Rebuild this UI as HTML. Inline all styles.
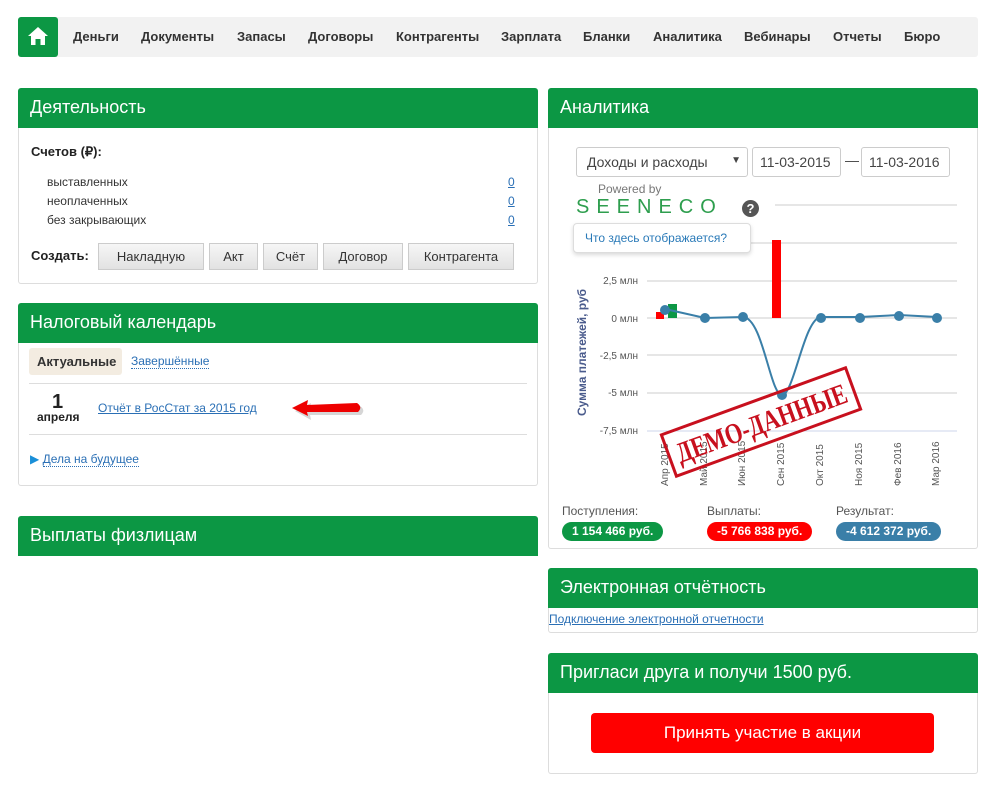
<!DOCTYPE html>
<html><head><meta charset="utf-8"><style>
*{box-sizing:border-box;margin:0;padding:0}
body{width:992px;height:795px;background:#fff;font-family:"Liberation Sans",Arial,sans-serif;position:relative;overflow:hidden;color:#222}
.a{position:absolute}
.nav{left:18px;top:17px;width:960px;height:40px;background:#f2f2f2;border-radius:3px}
.nav span{position:absolute;top:12px;font-size:13px;font-weight:bold;color:#333}
.home{left:18px;top:17px;width:40px;height:40px;background:#0c9744;border-radius:3px}
.hd{background:#0c9744;color:#fff;font-size:18px;height:40px;padding:9px 12px;border-radius:3px 3px 0 0}
.box{border:1px solid #ddd;border-top:none;border-radius:0 0 3px 3px}
.lnk{color:#2a6fb5;text-decoration:underline}
.btn{position:absolute;top:243px;height:27px;background:linear-gradient(#f6f6f6,#e2e2e2);border:1px solid #ccc;font-size:13px;text-align:center;line-height:25px;color:#333}
.sm{font-size:12px;color:#333}
.pill{position:absolute;top:522px;height:19px;border-radius:10px;color:#fff;font-weight:bold;font-size:12px;line-height:19px;padding:0 10px}
</style></head><body>
<div class="a nav">
<span style="left:55px">Деньги</span><span style="left:123px">Документы</span><span style="left:219px">Запасы</span><span style="left:290px">Договоры</span><span style="left:378px">Контрагенты</span><span style="left:483px">Зарплата</span><span style="left:565px">Бланки</span><span style="left:635px">Аналитика</span><span style="left:726px">Вебинары</span><span style="left:815px">Отчеты</span><span style="left:886px">Бюро</span>
</div>
<div class="a home"><svg width="40" height="40"><path d="M20 10 L30 19 H27 V28 H22.5 V22 H17.5 V28 H13 V19 H10 Z" fill="#fff"/></svg></div>

<div class="a hd" style="left:18px;top:88px;width:520px">Деятельность</div>
<div class="a box" style="left:18px;top:128px;width:520px;height:156px"></div>
<div class="a" style="left:31px;top:144px;font-size:13px;font-weight:bold">Счетов (₽):</div>
<div class="a sm" style="left:47px;top:175px">выставленных</div>
<div class="a sm" style="left:47px;top:194px">неоплаченных</div>
<div class="a sm" style="left:47px;top:213px">без закрывающих</div>
<div class="a lnk sm" style="left:508px;top:175px;color:#2a6fb5">0</div>
<div class="a lnk sm" style="left:508px;top:194px;color:#2a6fb5">0</div>
<div class="a lnk sm" style="left:508px;top:213px;color:#2a6fb5">0</div>
<div class="a" style="left:31px;top:248px;font-size:13px;font-weight:bold">Создать:</div>
<div class="btn" style="left:98px;width:106px">Накладную</div>
<div class="btn" style="left:209px;width:49px">Акт</div>
<div class="btn" style="left:263px;width:55px">Счёт</div>
<div class="btn" style="left:323px;width:80px">Договор</div>
<div class="btn" style="left:408px;width:106px">Контрагента</div>

<div class="a hd" style="left:18px;top:303px;width:520px">Налоговый календарь</div>
<div class="a box" style="left:18px;top:343px;width:520px;height:143px"></div>
<div class="a" style="left:29px;top:348px;width:93px;height:27px;background:#f3ece1;border-radius:3px;font-size:13px;font-weight:bold;color:#333;padding:6px 8px">Актуальные</div>
<div class="a sm" style="left:131px;top:354px;color:#2a6fb5;border-bottom:1px dotted #2a6fb5">Завершённые</div>
<div class="a" style="left:29px;top:383px;width:498px;border-top:1px solid #ddd"></div>
<div class="a" style="left:29px;top:434px;width:498px;border-top:1px solid #ddd"></div>
<div class="a" style="left:52px;top:391px;font-size:20px;font-weight:bold">1</div>
<div class="a" style="left:37px;top:410px;font-size:12px;font-weight:bold">апреля</div>
<div class="a lnk sm" style="left:98px;top:401px;color:#2a6fb5">Отчёт в РосСтат за 2015 год</div>
<svg class="a" style="left:290px;top:397px" width="78" height="26"><path d="M3 11 L19 3 L18 8 L68 6 Q74 10 69 15 L18 15 L19 20 Z" fill="#999" opacity=".4" transform="translate(2,3)"/><path d="M2 11 L18 3 L17 8 L67 6 Q73 10 68 15 L17 15 L18 19 Z" fill="#e00"/></svg>
<div class="a" style="left:30px;top:452px;font-size:12px;color:#2a6fb5"><span style="color:#1a8fd8">▶</span> <span style="border-bottom:1px dotted #2a6fb5">Дела на будущее</span></div>

<div class="a hd" style="left:18px;top:516px;width:520px">Выплаты физлицам</div>

<div class="a hd" style="left:548px;top:88px;width:430px">Аналитика</div>
<div class="a box" style="left:548px;top:128px;width:430px;height:421px"></div>
<div class="a" style="left:576px;top:147px;width:172px;height:30px;border:1px solid #ccc;border-radius:3px;font-size:14px;color:#444;padding:6px 10px">Доходы и расходы<span style="position:absolute;right:6px;top:7px;font-size:10px">▼</span></div>
<div class="a" style="left:752px;top:147px;width:89px;height:30px;border:1px solid #ccc;border-radius:3px;font-size:14px;color:#444;padding:6px 7px">11-03-2015</div>
<div class="a" style="left:845px;top:152px;font-size:14px;color:#444">—</div>
<div class="a" style="left:861px;top:147px;width:89px;height:30px;border:1px solid #ccc;border-radius:3px;font-size:14px;color:#444;padding:6px 7px">11-03-2016</div>
<div class="a" style="left:598px;top:182px;font-size:12px;color:#777">Powered by</div>
<div class="a" style="left:576px;top:196px;font-size:20px;color:#2e9e4e;letter-spacing:7px;font-weight:300">ЅEENECO</div>
<div class="a" style="left:742px;top:200px;width:17px;height:17px;border-radius:50%;background:#555;color:#fff;font-size:13px;font-weight:bold;text-align:center;line-height:17px">?</div>
<svg class="a" style="left:548px;top:128px" width="430" height="420">
<g stroke="#ccc" stroke-width="1">
<line x1="227" y1="77" x2="409" y2="77"/><line x1="99" y1="115" x2="409" y2="115"/><line x1="99" y1="153" x2="409" y2="153"/><line x1="99" y1="190" x2="409" y2="190"/><line x1="99" y1="227" x2="409" y2="227"/><line x1="99" y1="265" x2="409" y2="265"/>
</g>
<line x1="99" y1="303" x2="409" y2="303" stroke="#ccd6eb"/>
<g font-size="10" fill="#555" text-anchor="end" font-family="Liberation Sans">
<text x="90" y="156">2,5 млн</text><text x="90" y="194">0 млн</text><text x="90" y="231">-2,5 млн</text><text x="90" y="268">-5 млн</text><text x="90" y="306">-7,5 млн</text></g>
<text transform="translate(38,288) rotate(-90)" font-size="12" font-weight="bold" fill="#4a5b8c" font-family="Liberation Sans">Сумма платежей, руб</text>
<rect x="108" y="184" width="8" height="7" fill="#f00"/><rect x="120" y="176" width="9" height="14" fill="#0c9744"/>
<rect x="224" y="112" width="9" height="78" fill="#f00"/>
<path d="M117 181 L157 190 L195 189 C215 190 222 267 234 267 C246 267 256 190 273 189 L312 189 L351 187 L389 189" fill="none" stroke="#3a7fa8" stroke-width="2"/>
<g fill="#3a7fa8"><circle cx="117" cy="182" r="5"/><circle cx="157" cy="190" r="5"/><circle cx="195" cy="189" r="5"/><circle cx="234" cy="267" r="5"/><circle cx="273" cy="190" r="5"/><circle cx="312" cy="190" r="5"/><circle cx="351" cy="188" r="5"/><circle cx="389" cy="190" r="5"/></g>
<g font-size="10" fill="#555" font-family="Liberation Sans">
<text transform="translate(120,358) rotate(-90)">Апр 2015</text><text transform="translate(159,358) rotate(-90)">Май 2015</text><text transform="translate(197,358) rotate(-90)">Июн 2015</text><text transform="translate(236,358) rotate(-90)">Сен 2015</text><text transform="translate(275,358) rotate(-90)">Окт 2015</text><text transform="translate(314,358) rotate(-90)">Ноя 2015</text><text transform="translate(353,358) rotate(-90)">Фев 2016</text><text transform="translate(391,358) rotate(-90)">Мар 2016</text></g>
<g transform="translate(213,294) rotate(-20)"><rect x="-98" y="-22" width="196" height="44" fill="none" stroke="#c8101e" stroke-width="3"/><text x="0" y="11" text-anchor="middle" font-size="29" font-weight="bold" fill="#c8101e" font-family="Liberation Serif" textLength="180" lengthAdjust="spacingAndGlyphs">ДЕМО-ДАННЫЕ</text></g>
</svg>
<div class="a" style="left:573px;top:223px;width:178px;height:30px;background:#fff;border:1px solid #ddd;border-radius:4px;box-shadow:0 2px 4px rgba(0,0,0,.15);font-size:12px;color:#2a7ab8;padding:7px 11px">Что здесь отображается?</div>
<div class="a sm" style="left:562px;top:504px;color:#555">Поступления:</div>
<div class="a sm" style="left:707px;top:504px;color:#555">Выплаты:</div>
<div class="a sm" style="left:836px;top:504px;color:#555">Результат:</div>
<div class="pill" style="left:562px;background:#0c9744">1 154 466 руб.</div>
<div class="pill" style="left:707px;background:#f00">-5 766 838 руб.</div>
<div class="pill" style="left:836px;background:#3a7fa8">-4 612 372 руб.</div>

<div class="a hd" style="left:548px;top:568px;width:430px">Электронная отчётность</div>
<div class="a box" style="left:548px;top:608px;width:430px;height:25px"></div>
<div class="a lnk sm" style="left:549px;top:612px;color:#2a6fb5">Подключение электронной отчетности</div>

<div class="a hd" style="left:548px;top:653px;width:430px">Пригласи друга и получи 1500 руб.</div>
<div class="a box" style="left:548px;top:693px;width:430px;height:81px"></div>
<div class="a" style="left:591px;top:713px;width:343px;height:40px;background:#f00;border-radius:4px;color:#fff;font-size:17px;text-align:center;line-height:40px">Принять участие в акции</div>
</body></html>
